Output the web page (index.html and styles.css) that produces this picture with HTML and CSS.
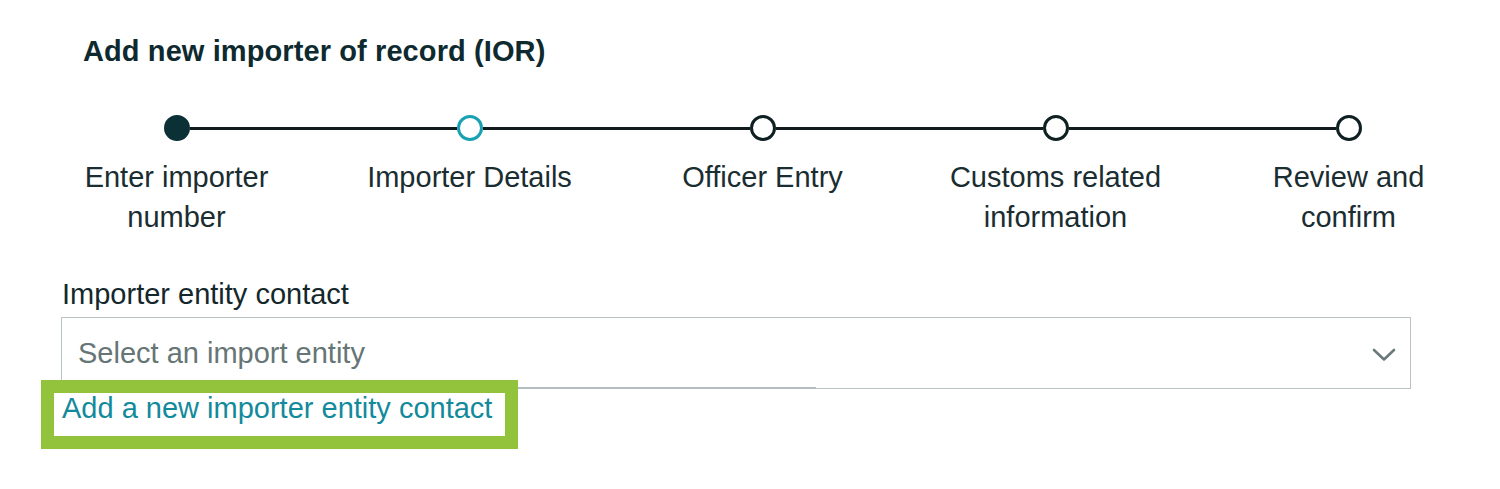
FILE: index.html
```html
<!DOCTYPE html>
<html lang="en">
<head>
<meta charset="utf-8">
<title>Add new importer of record (IOR)</title>
<link rel="stylesheet" href="styles.css">
</head>
<body>
<main class="page">
  <h1 class="title">Add new importer of record (IOR)</h1>

  <ol class="stepper">
    <li class="step step--done step--first">
      <div class="track"><span class="bar"></span><span class="dot"></span><span class="bar"></span></div>
      <span class="label">Enter importer number</span>
    </li>
    <li class="step step--current">
      <div class="track"><span class="bar"></span><span class="dot"></span><span class="bar"></span></div>
      <span class="label">Importer Details</span>
    </li>
    <li class="step">
      <div class="track"><span class="bar"></span><span class="dot"></span><span class="bar"></span></div>
      <span class="label">Officer Entry</span>
    </li>
    <li class="step">
      <div class="track"><span class="bar"></span><span class="dot"></span><span class="bar"></span></div>
      <span class="label">Customs related information</span>
    </li>
    <li class="step step--last">
      <div class="track"><span class="bar"></span><span class="dot"></span><span class="bar"></span></div>
      <span class="label">Review and confirm</span>
    </li>
  </ol>

  <div class="field">
    <label class="field-label" for="entity">Importer entity contact</label>
    <div class="select" id="entity">
      <span class="placeholder">Select an import entity</span>
      <svg class="chevron" width="24" height="14" viewBox="0 0 24 14" aria-hidden="true">
        <path d="M2 2 L12 11.5 L22 2" fill="none" stroke="#6b7a7a" stroke-width="2.6" stroke-linecap="round" stroke-linejoin="round"/>
      </svg>
    </div>
    <div class="link-wrap">
      <span class="highlight" aria-hidden="true"></span>
      <a class="link" href="#">Add a new importer entity contact</a>
    </div>
  </div>
</main>
</body>
</html>
```

FILE: styles.css
```css
* { box-sizing: border-box; }

html, body {
  margin: 0;
  padding: 0;
  background: #ffffff;
}

body {
  font-family: "Liberation Sans", Arial, Helvetica, sans-serif;
  color: #1a2d31;
  min-height: 489px;
}

.page {
  padding: 33px 0 60px 0;
  width: 1500px;
  min-height: 489px;
}

.title {
  margin: 0 0 0 83px;
  font-size: 29px;
  line-height: 36px;
  font-weight: 700;
  color: #0e2a2f;
  letter-spacing: 0.1px;
}

.stepper {
  list-style: none;
  margin: 46px 0 0 30px;
  padding: 0;
  display: grid;
  grid-template-columns: repeat(5, 293px);
}

.step {
  display: flex;
  flex-direction: column;
  align-items: center;
}

.track {
  display: flex;
  align-items: center;
  width: 100%;
  height: 26px;
}

.bar {
  flex: 1;
  height: 3px;
  background: #111a1c;
}

.step--first .track .bar:first-child,
.step--last .track .bar:last-child {
  background: transparent;
}

.dot {
  flex: none;
  width: 26px;
  height: 26px;
  border-radius: 50%;
  border: 3px solid #0f2023;
  background: #ffffff;
}

.step--done .dot {
  background: #0b3136;
  border-color: #0b3136;
}

.step--current .dot {
  border-color: #17a1b2;
  border-width: 3.5px;
}

.label {
  margin-top: 16px;
  max-width: 230px;
  text-align: center;
  font-size: 29px;
  line-height: 40px;
  color: #1a2d31;
}

.field {
  margin: 39px 0 0 61px;
  width: 1350px;
}

.field-label {
  display: block;
  font-size: 29px;
  line-height: 36px;
  color: #14282c;
  margin-bottom: 5px;
  padding-left: 1px;
}

.select {
  position: relative;
  display: flex;
  align-items: center;
  justify-content: space-between;
  height: 72px;
  border: 1px solid #b9c3c3;
  padding: 0 14px 0 16px;
  background: #ffffff;
}

.select::after {
  content: "";
  position: absolute;
  left: -1px;
  bottom: -1px;
  width: 755px;
  height: 2px;
  background: #b4bebe;
}

.placeholder {
  font-size: 29px;
  line-height: 36px;
  color: #667575;
}

.chevron {
  display: block;
  margin-top: 3px;
}

.link-wrap {
  position: relative;
  display: block;
  width: 460px;
  height: 36px;
  margin-top: 1px;
}

.link {
  display: inline-block;
  position: relative;
  z-index: 2;
  font-size: 29px;
  line-height: 36px;
  color: #138a9b;
  text-decoration: none;
  padding-left: 1px;
}

.highlight {
  position: absolute;
  left: -20px;
  top: -10px;
  width: 477px;
  height: 69px;
  border: 13px solid #93c23d;
  background: #ffffff;
  z-index: 1;
}
```
